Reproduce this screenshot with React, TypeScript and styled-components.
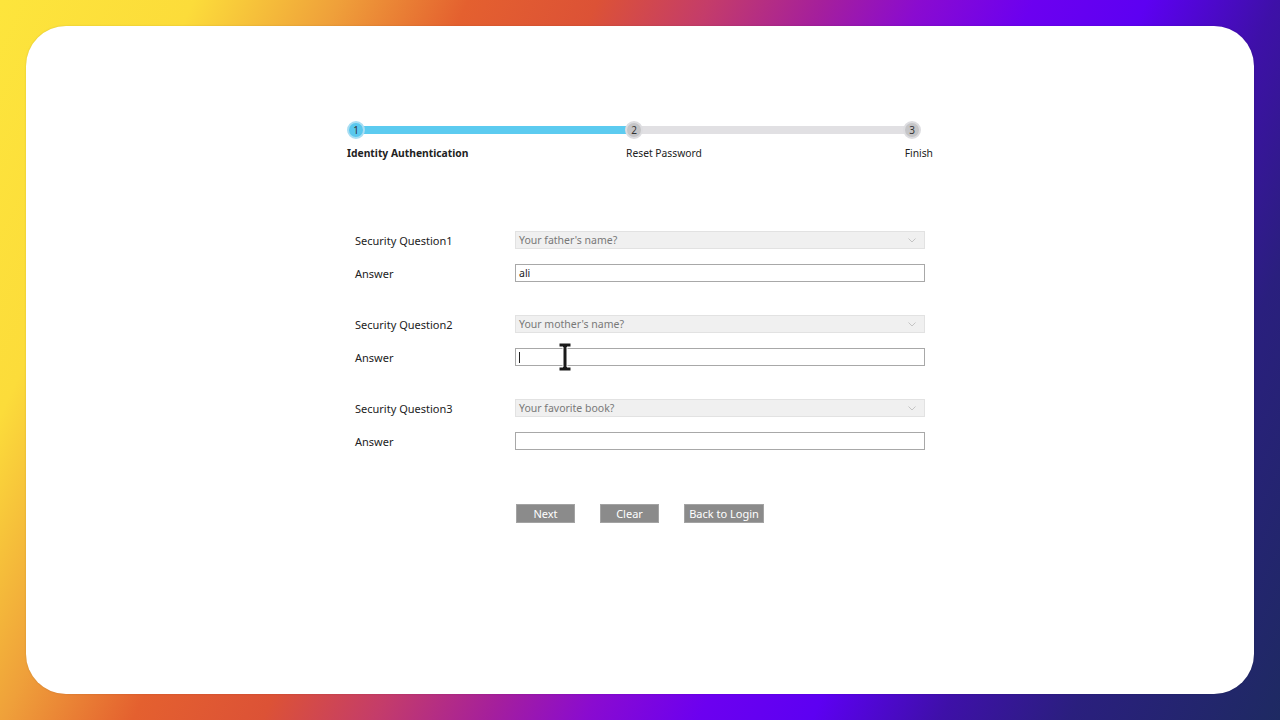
import * as React from 'react';
import styled, { createGlobalStyle } from 'styled-components';

const GlobalStyle = createGlobalStyle`
  html, body {
    margin: 0;
    padding: 0;
  }
  body {
    font-family: "Noto Sans", "Open Sans", sans-serif;
    color: #222;
  }
`;

const Page = styled.div`
  width: 1280px;
  height: 720px;
  box-sizing: border-box;
  padding: 26px;
  background: linear-gradient(
    115deg,
    #fde53c 0%,
    #fcdc3a 12%,
    #efa03a 21%,
    #e4602f 29%,
    #dc5236 37%,
    #c43c6a 44%,
    #a51f9c 51%,
    #8a0bd0 57%,
    #6c00f0 64%,
    #5d00f2 71%,
    #3e10a8 79%,
    #2a1f7e 87%,
    #1e2a62 100%
  );
`;

const Card = styled.div`
  height: 100%;
  box-sizing: border-box;
  background: #fff;
  border-radius: 40px;
  box-shadow: 0 0 2px rgba(0, 0, 0, 0.15);
  display: flex;
  flex-direction: column;
  align-items: center;
  padding-top: 95px;
`;

const Stepper = styled.div`
  width: 586px;
  display: flex;
  flex-direction: column;
`;

const Track = styled.div`
  width: 574px;
  display: flex;
  align-items: center;
  height: 18px;
`;

const Dot = styled.div<{ $active?: boolean }>`
  width: 14px;
  height: 14px;
  flex: none;
  border-radius: 50%;
  background: ${(p) => (p.$active ? '#5ac8ee' : '#c5c5c7')};
  border: 2px solid ${(p) => (p.$active ? '#a9def3' : '#dddde0')};
  display: flex;
  align-items: center;
  justify-content: center;
  font-size: 10px;
  line-height: 1;
  color: #333;
  position: relative;
  z-index: 1;
`;

const Segment = styled.div<{ $done?: boolean }>`
  flex: 1;
  height: 8px;
  margin: 0 -1px;
  background: ${(p) => (p.$done ? '#5ccbf0' : '#e1e0e3')};
`;

const Labels = styled.div`
  display: grid;
  grid-template-columns: 279px 1fr auto;
  margin-top: 7px;
  font-size: 10.3px;
  line-height: 14px;
  color: #222;
`;

const StepLabel = styled.div<{ $bold?: boolean }>`
  font-weight: ${(p) => (p.$bold ? 700 : 400)};
`;

const Form = styled.div`
  width: 570px;
  margin-top: 71px;
  display: flex;
  flex-direction: column;
  gap: 33px;
`;

const Group = styled.div`
  display: flex;
  flex-direction: column;
  gap: 15px;
`;

const Row = styled.div`
  display: grid;
  grid-template-columns: 160px 410px;
  align-items: center;
  height: 18px;
`;

const Label = styled.div`
  font-size: 11px;
  color: #222;
`;

const Select = styled.div`
  height: 18px;
  box-sizing: border-box;
  background: #f0f0f0;
  border: 1px solid #e2e2e2;
  display: flex;
  align-items: center;
  justify-content: space-between;
  padding: 0 8px 0 3px;
  font-size: 10.5px;
  color: #787878;
`;

const Input = styled.div`
  height: 18px;
  box-sizing: border-box;
  background: #fff;
  border: 1px solid #a8a8a8;
  display: flex;
  align-items: center;
  padding: 0 3px;
  font-size: 10.5px;
  color: #222;
  position: relative;
`;

const Caret = styled.span`
  width: 1px;
  height: 11px;
  background: #222;
`;

const Pointer = styled.svg`
  position: absolute;
  left: 42px;
  top: -7px;
`;

const Buttons = styled.div`
  width: 570px;
  margin-top: 54px;
  padding-left: 161px;
  box-sizing: border-box;
  display: flex;
  gap: 25px;
`;

const Button = styled.div<{ $w: number }>`
  width: ${(p) => p.$w}px;
  height: 19px;
  box-sizing: border-box;
  background: #8b8b8b;
  border: 1px solid #a3a3a3;
  color: #fff;
  font-size: 11px;
  display: flex;
  align-items: center;
  justify-content: center;
`;

const Chevron = () => (
  <svg width="8" height="5" viewBox="0 0 8 5">
    <path d="M0.5 0.5 L4 4 L7.5 0.5" fill="none" stroke="#c4c4c4" strokeWidth="1" />
  </svg>
);

const questions = [
  { q: 'Security Question1', sel: "Your father's name?", answer: 'ali' },
  { q: 'Security Question2', sel: "Your mother's name?", answer: '', focus: true },
  { q: 'Security Question3', sel: 'Your favorite book?', answer: '' },
];

export default function App() {
  return (
    <>
      <GlobalStyle />
      <Page>
        <Card>
          <Stepper>
            <Track>
              <Dot $active>1</Dot>
              <Segment $done />
              <Dot>2</Dot>
              <Segment />
              <Dot>3</Dot>
            </Track>
            <Labels>
              <StepLabel $bold>Identity Authentication</StepLabel>
              <StepLabel>Reset Password</StepLabel>
              <StepLabel>Finish</StepLabel>
            </Labels>
          </Stepper>

          <Form>
            {questions.map((item) => (
              <Group key={item.q}>
                <Row>
                  <Label>{item.q}</Label>
                  <Select>
                    <span>{item.sel}</span>
                    <Chevron />
                  </Select>
                </Row>
                <Row>
                  <Label>Answer</Label>
                  <Input>
                    {item.answer}
                    {item.focus && (
                      <>
                        <Caret />
                        <Pointer width="14" height="30" viewBox="0 0 14 30">
                          <path
                            d="M1 1 H13 V5 H9 V25 H13 V29 H1 V25 H5 V5 H1 Z"
                            fill="#1a1a1a"
                            stroke="#fff"
                            strokeWidth="1"
                          />
                        </Pointer>
                      </>
                    )}
                  </Input>
                </Row>
              </Group>
            ))}
          </Form>

          <Buttons>
            <Button $w={59}>Next</Button>
            <Button $w={59}>Clear</Button>
            <Button $w={80}>Back to Login</Button>
          </Buttons>
        </Card>
      </Page>
    </>
  );
}
